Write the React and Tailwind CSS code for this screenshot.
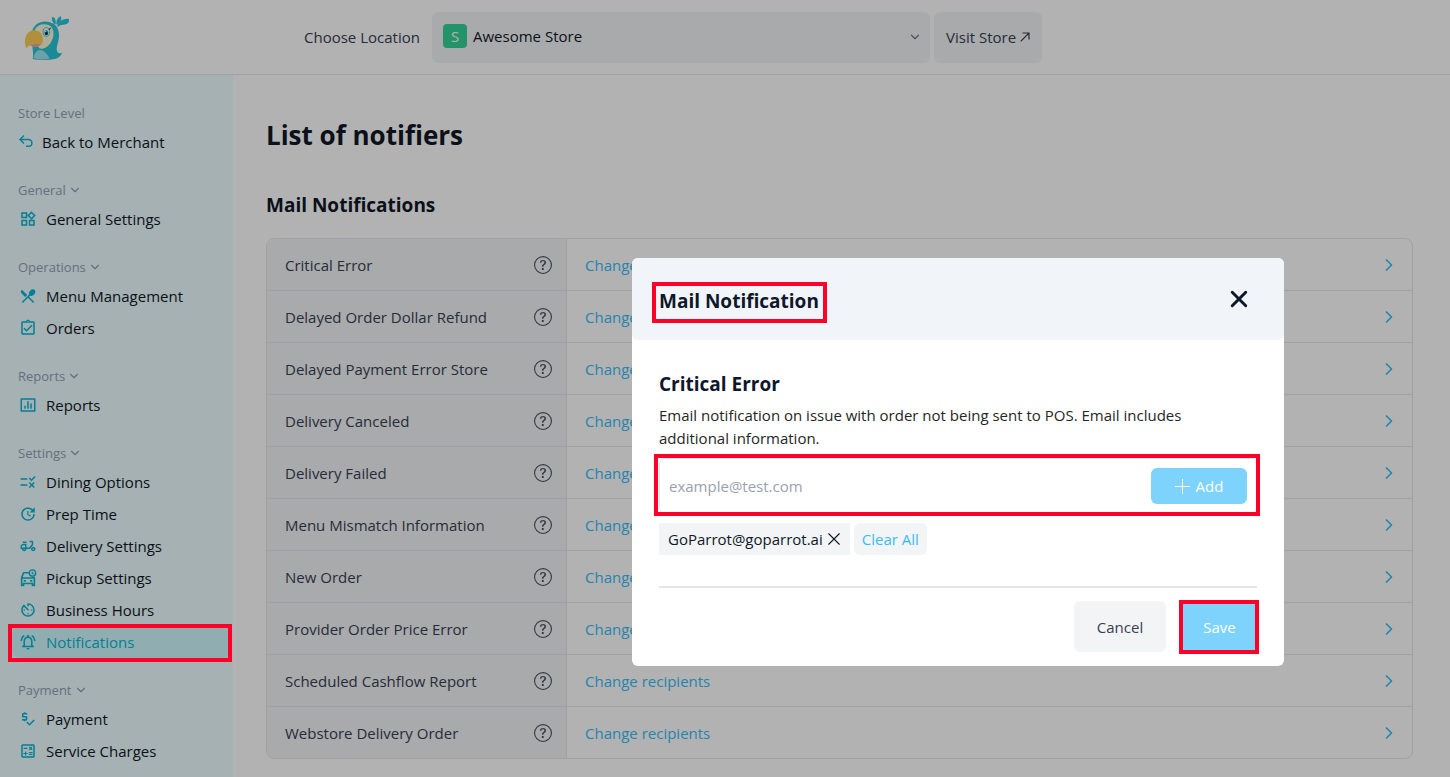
import { useState } from 'react';
import {
  MdAvTimer,
  MdOutlineAssignmentTurnedIn,
  MdOutlineCalculate,
  MdOutlineDeliveryDining,
  MdOutlineNotificationsActive,
  MdOutlinePriceCheck,
  MdOutlineWidgets,
  MdRestaurantMenu,
  MdRule,
  MdUpdate,
} from 'react-icons/md';
import { RiBarChartBoxLine } from 'react-icons/ri';
import { BsQuestionCircle } from 'react-icons/bs';
import { ChevronDown, ChevronRight } from 'lucide-react';

const ParrotLogo = () => (
  <svg viewBox="72 48 138 138" className="mt-0.5 h-[46px] w-[46px]" role="img" aria-label="GoParrot">
    <path d="M98 180 C102 160 96 150 98 138 L96 98 C102 72 128 62 150 70 C170 76 178 92 177 112 C176 134 166 146 172 158 C176 164 182 164 187 161 C183 171 174 178 164 180 C142 185 116 183 98 180Z" fill="#27c6d8" />
    <path d="M104 94 C110 76 132 72 146 78 C162 84 164 108 156 124 C148 142 134 152 118 148 L106 130Z" fill="#fbf6dc" />
    <path d="M100 177 C104 160 112 152 122 153 C134 155 144 168 148 179 C132 183 114 182 100 177Z" fill="#9de6ef" />
    <path d="M102 94 C84 94 75 110 75 128 C75 138 77 144 80 147 C84 138 94 140 104 142 C118 144 128 138 129 124 C130 106 118 94 102 94Z" fill="#fdcf58" />
    <path d="M92 140 C102 130 114 136 122 135 C117 145 102 146 92 140Z" fill="#f5a0a0" />
    <ellipse cx="139" cy="99" rx="10" ry="13" fill="#fff" stroke="#27c6d8" strokeWidth="2.5" />
    <ellipse cx="139" cy="101" rx="6" ry="8" fill="#27b4d0" />
    <ellipse cx="139" cy="103" rx="4" ry="5" fill="#111827" />
    <circle cx="137" cy="98" r="2" fill="#fff" />
    <path d="M146 92 C149 91 151 89 152 86" fill="none" stroke="#111827" strokeWidth="3" />
    <path d="M164 76 C156 68 153 58 158 53 C166 55 168 66 167 76Z" fill="#27c6d8" />
    <path d="M169 76 C168 66 174 54 182 52 C187 60 182 71 171 77Z" fill="#27c6d8" />
    <path d="M172 79 C178 66 194 57 206 60 C210 70 202 77 190 77 C182 77 176 80 173 84Z" fill="#27c6d8" />
  </svg>
);

const BackIcon = ({ className }) => (
  <svg viewBox="0 0 16 16" className={className} fill="none" stroke="currentColor" strokeWidth="1.4" aria-hidden="true">
    <path d="M6 1.5L2 5.5l4 4M2 5.5h8.5a3.4 3.4 0 010 6.8H8" />
  </svg>
);

const CarClockIcon = ({ className }) => (
  <svg viewBox="0 0 16 17" className={className} fill="none" stroke="currentColor" strokeWidth="1.5" aria-hidden="true">
    <path d="M9 3.5H3.8L2 8.5v7h1.8v-1.8h8.4v1.8H14V8.5l-.4-1.2M2.4 8.5h11.2" />
    <circle cx="12.2" cy="3.8" r="3" strokeWidth="1.3" />
    <path d="M12 2.4v1.7l1.2.6" strokeWidth="1" />
    <path d="M4 11.2h2M10 11.2h2" strokeWidth="1.8" />
  </svg>
);

const CloseIcon = ({ className, strokeWidth }) => (
  <svg viewBox="0 0 16 16" className={className} fill="none" stroke="currentColor" strokeWidth={strokeWidth} strokeLinecap="round" aria-hidden="true">
    <path d="M2 2l12 12M14 2L2 14" />
  </svg>
);

const Highlight = ({ className }) => (
  <span aria-hidden="true" className={`pointer-events-none absolute z-50 border-4 border-[#ff0029] ${className}`} />
);

const navGroups = [
  {
    title: 'General',
    items: [{ label: 'General Settings', icon: MdOutlineWidgets }],
  },
  {
    title: 'Operations',
    items: [
      { label: 'Menu Management', icon: MdRestaurantMenu },
      { label: 'Orders', icon: MdOutlineAssignmentTurnedIn },
    ],
  },
  {
    title: 'Reports',
    items: [{ label: 'Reports', icon: RiBarChartBoxLine }],
  },
  {
    title: 'Settings',
    items: [
      { label: 'Dining Options', icon: MdRule },
      { label: 'Prep Time', icon: MdUpdate },
      { label: 'Delivery Settings', icon: MdOutlineDeliveryDining },
      { label: 'Pickup Settings', icon: CarClockIcon },
      { label: 'Business Hours', icon: MdAvTimer },
      { label: 'Notifications', icon: MdOutlineNotificationsActive, active: true },
    ],
  },
  {
    title: 'Payment',
    items: [
      { label: 'Payment', icon: MdOutlinePriceCheck },
      { label: 'Service Charges', icon: MdOutlineCalculate },
    ],
  },
];

const notifiers = [
  'Critical Error',
  'Delayed Order Dollar Refund',
  'Delayed Payment Error Store',
  'Delivery Canceled',
  'Delivery Failed',
  'Menu Mismatch Information',
  'New Order',
  'Provider Order Price Error',
  'Scheduled Cashflow Report',
  'Webstore Delivery Order',
];

const Header = () => (
  <header className="flex h-[75px] items-center border-b border-gray-200 bg-white pl-6">
    <a href="#home" className="w-[280px] shrink-0">
      <ParrotLogo />
    </a>
    <label htmlFor="location" className="w-32 shrink-0 text-gray-700">Choose Location</label>
    <div className="relative w-full max-w-[498px]">
      <span className="pointer-events-none absolute left-[11px] top-3 flex h-6 w-6 items-center justify-center rounded-sm bg-[#34d399] text-white">S</span>
      <select id="location" className="h-[51px] w-full appearance-none rounded-md bg-gray-100 pb-0.5 pl-[41px] text-gray-900">
        <option>Awesome Store</option>
      </select>
      <ChevronDown className="pointer-events-none absolute right-2 top-[18px] h-3.5 w-3.5 text-gray-500" />
    </div>
    <a href="#store" className="ml-1 flex h-[51px] shrink-0 items-center gap-1 rounded-md bg-gray-100 px-3 text-gray-700">
      Visit Store
      <svg viewBox="0 0 10 10" className="h-2.5 w-2.5" fill="none" stroke="currentColor" strokeWidth="1.2" aria-hidden="true">
        <path d="M.7 9.3L9 1M2.5 1h6.5v6.5" />
      </svg>
    </a>
  </header>
);

const NavItem = ({ label, icon: Icon, active }) => (
  <a
    href={`#${label.toLowerCase().replace(' ', '-')}`}
    className={`relative flex h-8 items-center gap-2 rounded-lg pl-[7px] ${active ? 'bg-cyan-100 text-[#06b6d4]' : 'text-gray-900'}`}
  >
    <Icon className="h-[18px] w-[18px] text-[#06b6d4]" />
    <span className="pl-px">{label}</span>
    {active && <Highlight className="-bottom-1 -left-1 right-0 -top-0.5" />}
  </a>
);

const Sidebar = () => (
  <nav className="w-[233px] shrink-0 bg-cyan-50 pb-2 pl-3 pr-px pt-[25px]">
    <p className="flex h-[26px] items-center pl-1.5 text-[13px] text-slate-400">Store Level</p>
    <a href="#merchant" className="flex h-8 items-center gap-2 pl-1.5 text-gray-900">
      <BackIcon className="h-4 w-4 text-[#06b6d4]" />
      Back to Merchant
    </a>
    {navGroups.map(({ title, items }) => (
      <div key={title} className="mt-[19px]">
        <button type="button" className="flex h-[26px] items-center gap-0.5 pl-1.5 text-[13px] text-slate-400">
          {title}
          <ChevronDown className="h-3.5 w-3.5" />
        </button>
        {items.map((item) => <NavItem key={item.label} {...item} />)}
      </div>
    ))}
  </nav>
);

const NotifierTable = () => (
  <table className="mt-[19px] w-full border-separate border-spacing-0 rounded-lg border border-gray-200">
    <tbody>
      {notifiers.map((name) => (
        <tr key={name} className="group">
          <th scope="row" className="h-[52px] w-[300px] border-b border-r border-gray-200 bg-gray-100 p-0 text-left font-normal text-gray-700 group-first:rounded-tl-lg group-last:h-[51px] group-last:rounded-bl-lg group-last:border-b-0">
            <div className="flex items-center justify-between pl-[18px] pr-3.5">
              {name}
              <button type="button" aria-label={`About ${name}`}>
                <BsQuestionCircle className="h-[18px] w-[18px] text-gray-600" />
              </button>
            </div>
          </th>
          <td className="border-b border-gray-200 p-0 group-last:border-b-0">
            <a href="#recipients" className="flex items-center justify-between pl-[18px] pr-[13px] text-[#38bdf8]">
              Change recipients
              <ChevronRight className="h-5 w-5" strokeWidth={2} />
            </a>
          </td>
        </tr>
      ))}
    </tbody>
  </table>
);

const MailModal = () => {
  const [recipients, setRecipients] = useState(['GoParrot@goparrot.ai']);
  const [email, setEmail] = useState('');

  const addRecipient = () => {
    if (!email) return;
    setRecipients([...recipients, email]);
    setEmail('');
  };

  return (
    <div className="fixed inset-0 z-10 flex items-start justify-end bg-black/30 pr-[166px] pt-[258px]">
      <div role="dialog" aria-labelledby="modal-title" className="w-full max-w-[652px] rounded-md bg-white">
        <div className="flex h-[82px] items-center justify-between rounded-md bg-slate-100 pl-[27px] pr-9">
          <div className="relative pt-1">
            <h2 id="modal-title" className="text-[19px] font-bold leading-7 text-slate-900">Mail Notification</h2>
            <Highlight className="-bottom-2 -left-[7px] -right-2 -top-px" />
          </div>
          <button type="button" aria-label="Close" className="text-slate-900">
            <CloseIcon className="h-[18px] w-[18px]" strokeWidth={2.6} />
          </button>
        </div>

        <div className="px-[27px] pb-3.5 pt-[30px]">
          <h3 className="text-[19px] font-bold leading-7 text-slate-900">Critical Error</h3>
          <p className="mt-1.5 pr-8 leading-[23px] text-neutral-800">
            Email notification on issue with order not being sent to POS. Email includes additional information.
          </p>

          <div className="relative mt-2 flex h-14 items-center rounded-md border border-gray-200 pr-[9px]">
            <input
              type="email"
              aria-label="Email"
              placeholder="example@test.com"
              value={email}
              onChange={(e) => setEmail(e.target.value)}
              className="h-full min-w-0 flex-1 bg-transparent pl-[9px] outline-none placeholder:text-gray-400"
            />
            <button type="button" onClick={addRecipient} className="flex h-9 w-24 items-center justify-center gap-1.5 rounded-md bg-[#7dd3fc] text-white">
              <svg viewBox="0 0 15 15" className="h-[15px] w-[15px]" stroke="currentColor" aria-hidden="true">
                <path d="M7.5 0v15M0 7.5h15" />
              </svg>
              Add
            </button>
            <Highlight className="-bottom-[3px] -left-1.5 -right-1 -top-[5px]" />
          </div>

          <div className="mt-[9px] flex h-8 gap-1">
            {recipients.map((recipient) => (
              <span key={recipient} className="flex items-center gap-1 bg-gray-100 px-[9px] text-gray-900">
                {recipient}
                <button type="button" aria-label={`Remove ${recipient}`} onClick={() => setRecipients(recipients.filter((r) => r !== recipient))}>
                  <CloseIcon className="h-3.5 w-3.5" strokeWidth={1.3} />
                </button>
              </span>
            ))}
            <button type="button" onClick={() => setRecipients([])} className="rounded-md bg-gray-100 px-2 text-[#38bdf8]">Clear All</button>
          </div>

          <div className="mt-[31px] flex justify-end gap-4 border-t-2 border-neutral-200 pt-[13px]">
            <button type="button" className="h-[51px] w-[92px] rounded-md bg-gray-100 text-gray-700">Cancel</button>
            <button type="button" className="relative h-[51px] w-[75px] bg-[#7dd3fc] text-white">
              Save
              <Highlight className="-bottom-0.5 -left-[3px] -right-0.5 -top-px" />
            </button>
          </div>
        </div>
      </div>
    </div>
  );
};

const App = () => (
  <div className="flex min-h-screen flex-col bg-white font-['Open_Sans','Noto_Sans',sans-serif] text-[15px] leading-6">
    <Header />
    <div className="flex flex-1">
      <Sidebar />
      <main className="min-w-0 flex-1 pb-4 pl-[33px] pr-[37px] pt-[42px]">
        <h1 className="text-[26px] font-bold leading-9 text-gray-900">List of notifiers</h1>
        <h2 className="mt-[38px] text-[19px] font-bold leading-7 text-gray-900">Mail Notifications</h2>
        <NotifierTable />
      </main>
    </div>
    <MailModal />
  </div>
);

export default App;
